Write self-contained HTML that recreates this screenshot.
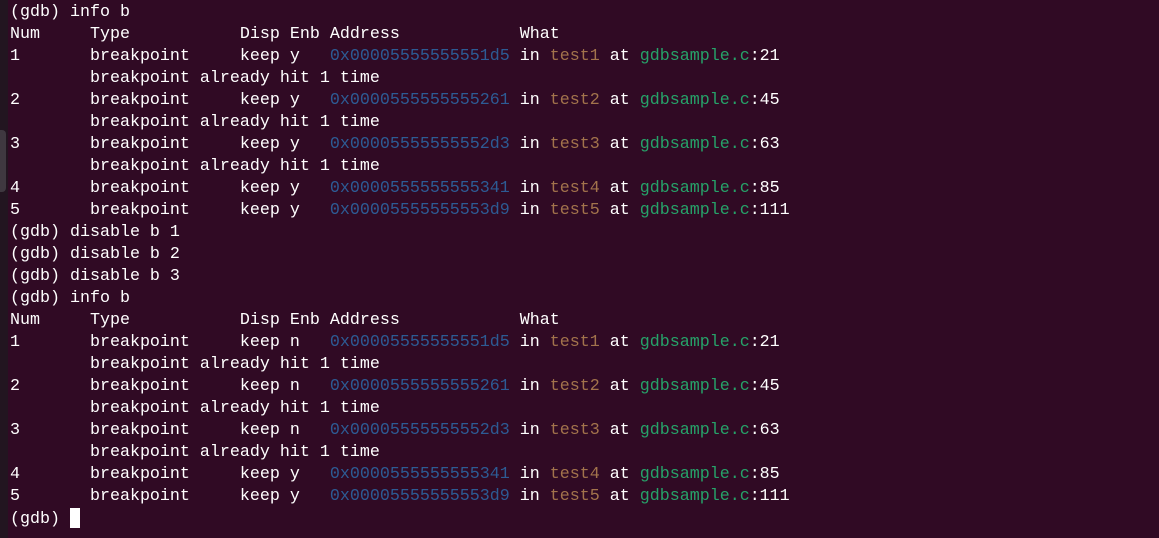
<!DOCTYPE html>
<html><head><meta charset="utf-8"><style>
html,body{margin:0;padding:0;}
body{width:1159px;height:538px;background:#300a24;overflow:hidden;position:relative;}
.strip{position:absolute;left:0;top:0;width:8px;height:538px;background:#221520;}
.thumb{position:absolute;left:0;top:130px;width:6px;height:62px;background:#3f3840;border-radius:0 4px 4px 0;}
pre{position:absolute;left:10px;top:2px;margin:0;font-family:"Liberation Mono",monospace;font-size:16.67px;line-height:22px;color:#ffffff;}
.a{color:#2d5b94}.f{color:#a2734c}.s{color:#26a269}
.cur{display:inline-block;width:10px;height:20px;background:#fff;vertical-align:-5px;}
</style></head><body>
<div class="strip"></div><div class="thumb"></div>
<pre>(gdb) info b
Num     Type           Disp Enb Address            What
1       breakpoint     keep y   <span class="a">0x00005555555551d5</span> in <span class="f">test1</span> at <span class="s">gdbsample.c</span>:21
        breakpoint already hit 1 time
2       breakpoint     keep y   <span class="a">0x0000555555555261</span> in <span class="f">test2</span> at <span class="s">gdbsample.c</span>:45
        breakpoint already hit 1 time
3       breakpoint     keep y   <span class="a">0x00005555555552d3</span> in <span class="f">test3</span> at <span class="s">gdbsample.c</span>:63
        breakpoint already hit 1 time
4       breakpoint     keep y   <span class="a">0x0000555555555341</span> in <span class="f">test4</span> at <span class="s">gdbsample.c</span>:85
5       breakpoint     keep y   <span class="a">0x00005555555553d9</span> in <span class="f">test5</span> at <span class="s">gdbsample.c</span>:111
(gdb) disable b 1
(gdb) disable b 2
(gdb) disable b 3
(gdb) info b
Num     Type           Disp Enb Address            What
1       breakpoint     keep n   <span class="a">0x00005555555551d5</span> in <span class="f">test1</span> at <span class="s">gdbsample.c</span>:21
        breakpoint already hit 1 time
2       breakpoint     keep n   <span class="a">0x0000555555555261</span> in <span class="f">test2</span> at <span class="s">gdbsample.c</span>:45
        breakpoint already hit 1 time
3       breakpoint     keep n   <span class="a">0x00005555555552d3</span> in <span class="f">test3</span> at <span class="s">gdbsample.c</span>:63
        breakpoint already hit 1 time
4       breakpoint     keep y   <span class="a">0x0000555555555341</span> in <span class="f">test4</span> at <span class="s">gdbsample.c</span>:85
5       breakpoint     keep y   <span class="a">0x00005555555553d9</span> in <span class="f">test5</span> at <span class="s">gdbsample.c</span>:111
(gdb) <span class="cur"></span></pre>
</body></html>
